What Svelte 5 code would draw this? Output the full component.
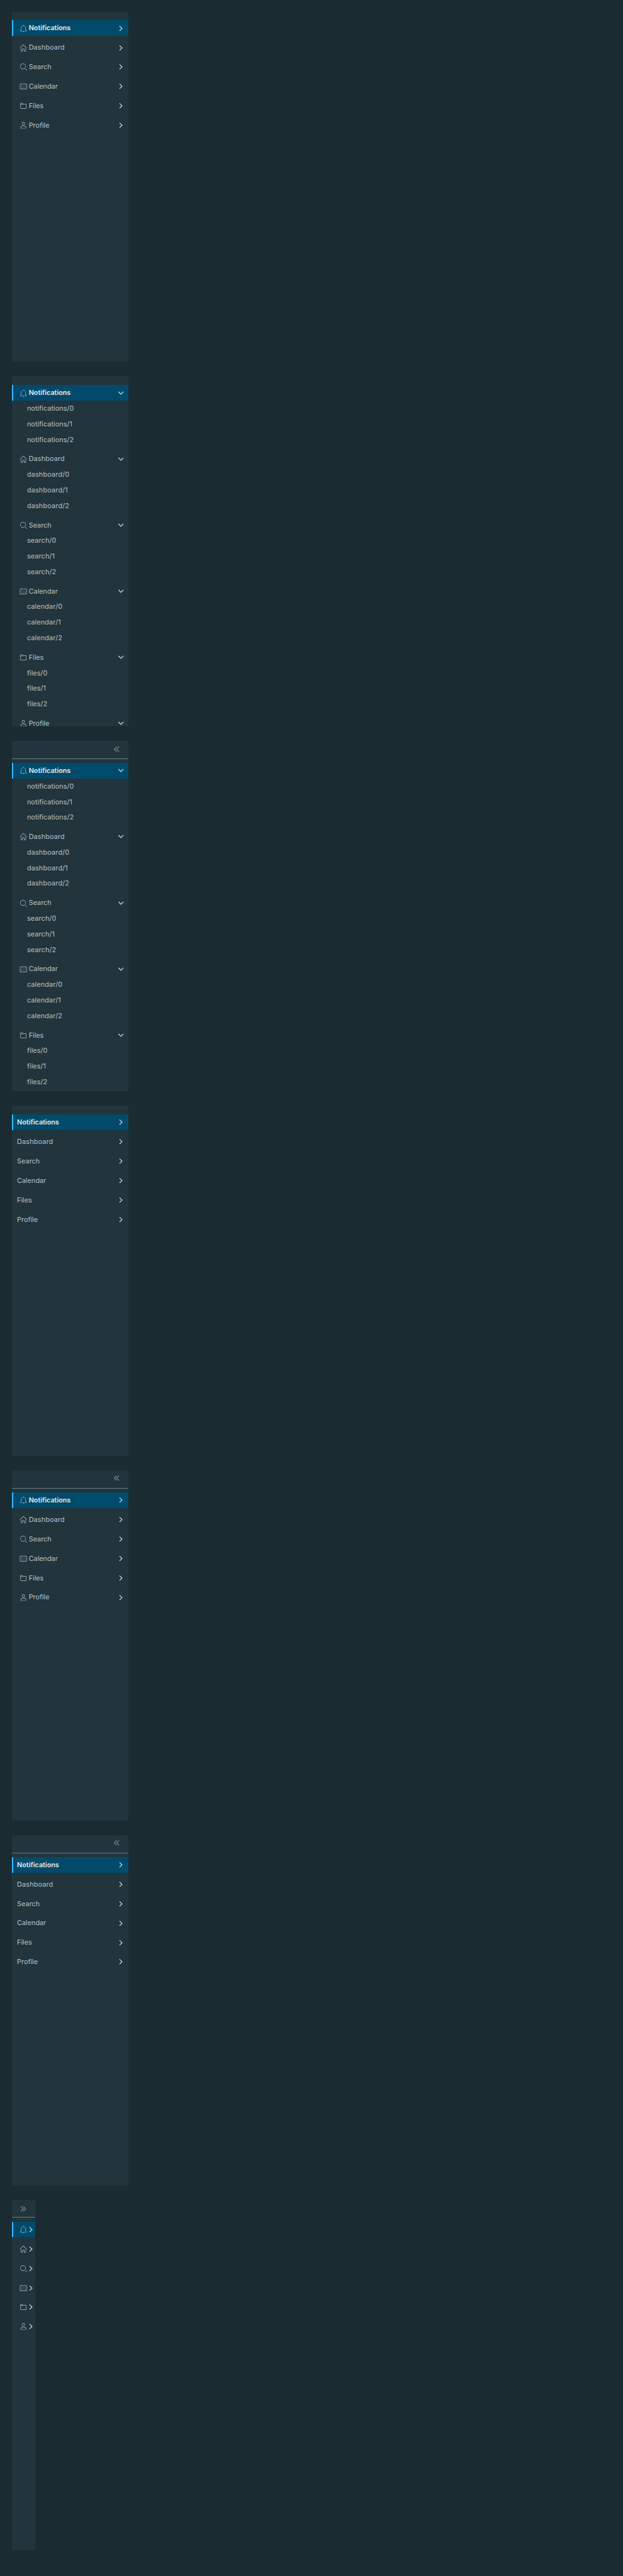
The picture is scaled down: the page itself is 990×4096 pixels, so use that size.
<script>
  const groups = [
    { name: 'Notifications', track: -0.03, childTrack: 0.08 },
    { name: 'Dashboard', track: 0.2, childTrack: 0.25 },
    { name: 'Search', track: 0.05, childTrack: 0.2 },
    { name: 'Calendar', track: 0, childTrack: 0.2 },
    { name: 'Files', track: 0, childTrack: 0.1 },
    { name: 'Profile', track: 0, childTrack: 0.1 }
  ];
  const panels = [
    { icons: true, shown: 6 },
    { icons: true, shown: 6, open: true },
    { icons: true, shown: 5, open: true, header: true },
    { shown: 6 },
    { icons: true, shown: 6, header: true },
    { shown: 6, header: true },
    { icons: true, shown: 6, header: true, collapsed: true }
  ];
</script>

{#snippet icon(name)}
  <svg class="icon" viewBox="0 0 36 36" aria-hidden="true">
    {#if name === 'Notifications'}
      <path d="M32.51,27.83A14.4,14.4,0,0,1,30,24.9a12.63,12.63,0,0,1-1.35-4.81V15.15A10.81,10.81,0,0,0,19.21,4.4V3.11a1.33,1.33,0,1,0-2.67,0V4.42A10.81,10.81,0,0,0,7.21,15.15v4.94A12.63,12.63,0,0,1,5.86,24.9a14.4,14.4,0,0,1-2.47,2.93,1,1,0,0,0-.34.75v1.36a1,1,0,0,0,1,1h27.8a1,1,0,0,0,1-1V28.58A1,1,0,0,0,32.51,27.83ZM5.13,28.94a16.17,16.17,0,0,0,2.44-3,14.24,14.24,0,0,0,1.65-5.85V15.15a8.74,8.74,0,1,1,17.47,0v4.94a14.24,14.24,0,0,0,1.65,5.85,16.17,16.17,0,0,0,2.44,3Z" />
      <path d="M18,34.28A2.67,2.67,0,0,0,20.58,32H15.32A2.67,2.67,0,0,0,18,34.28Z" />
    {:else if name === 'Dashboard'}
      <path d="M33.71,17.29l-15-15a1,1,0,0,0-1.41,0l-15,15a1,1,0,0,0,1.41,1.41L18,4.41,32.29,18.71a1,1,0,0,0,1.41-1.41Z" />
      <path d="M28,32h-5V22H13V32H8V18L6,20V32a2,2,0,0,0,2,2h7V24h6V34h7a2,2,0,0,0,2-2V19.76l-2-2Z" />
    {:else if name === 'Search'}
      <path d="M16.33,5.05A10.95,10.95,0,1,1,5.39,16,11,11,0,0,1,16.33,5.05m0-2.05a13,13,0,1,0,13,13,13,13,0,0,0-13-13Z" />
      <path d="M35,33.29l-7.37-7.42-1.42,1.41,7.37,7.42A1,1,0,1,0,35,33.29Z" />
    {:else if name === 'Calendar'}
      <path d="M32.25,6H29V8h3V30H4V8H7V6H3.75A1.78,1.78,0,0,0,2,7.81V30.19A1.78,1.78,0,0,0,3.75,32h28.5A1.78,1.78,0,0,0,34,30.19V7.81A1.78,1.78,0,0,0,32.25,6Z" />
      {#each [14, 19, 24] as y}
        {#each [8, 14, 20, 26] as x}
          <rect {x} {y} width="2" height="2" />
        {/each}
      {/each}
      <path d="M10,10a1,1,0,0,0,1-1V3A1,1,0,0,0,9,3V9A1,1,0,0,0,10,10Z" />
      <path d="M26,10a1,1,0,0,0,1-1V3a1,1,0,0,0-2,0V9A1,1,0,0,0,26,10Z" />
      <rect x="13" y="6" width="10" height="2" />
    {:else if name === 'Files'}
      <path d="M30,9H16.42L14.11,5.82A2,2,0,0,0,12.49,5H6A2,2,0,0,0,4,7V29a2,2,0,0,0,2,2H30a2,2,0,0,0,2-2V11A2,2,0,0,0,30,9Zm0,20H6V13h7.31a2,2,0,0,0,2-2H6V7h6.49l2.61,3.59a1,1,0,0,0,.81.41H30Z" />
    {:else}
      <path d="M18,17a7,7,0,1,0-7-7A7,7,0,0,0,18,17ZM18,5a5,5,0,1,1-5,5A5,5,0,0,1,18,5Z" />
      <path d="M30.47,24.37a17.16,17.16,0,0,0-24.93,0A2,2,0,0,0,5,25.74V31a2,2,0,0,0,2,2H29a2,2,0,0,0,2-2V25.74A2,2,0,0,0,30.47,24.37ZM29,31H7V25.73a15.17,15.17,0,0,1,22,0h0Z" />
    {/if}
  </svg>
{/snippet}

<main>
  {#each panels as p}
    <nav class:collapsed={p.collapsed} class:with-header={p.header} class:with-icons={p.icons}>
      {#if p.header}
        <div class="toggle">
          <svg class="double" viewBox="0 0 36 36" aria-hidden="true">
            <path d="M29,19.41a1,1,0,0,1-.71-.29L18,8.83,7.71,19.12a1,1,0,0,1-1.41-1.41L18,6,29.71,17.71A1,1,0,0,1,29,19.41Z" />
            <path d="M29,30.41a1,1,0,0,1-.71-.29L18,19.83,7.71,30.12a1,1,0,0,1-1.41-1.41L18,17,29.71,28.71A1,1,0,0,1,29,30.41Z" />
          </svg>
        </div>
      {/if}
      <div class="groups">
        {#each groups.slice(0, p.shown) as { name, track, childTrack }, i}
          <section>
            <div class="item" class:active={i === 0}>
              {#if p.icons}{@render icon(name)}{/if}
              {#if !p.collapsed}<span class="label" style:letter-spacing="{track}px">{name}</span>{/if}
              <svg class="caret" class:down={p.open} viewBox="0 0 36 36" aria-hidden="true">
                <path d="M29.52,22.52,18,10.6,6.48,22.52a1.7,1.7,0,0,0,2.45,2.36L18,15.49l9.08,9.39a1.7,1.7,0,0,0,2.45-2.36Z" />
              </svg>
            </div>
            {#if p.open && i < 5}
              {#each [0, 1, 2] as n}
                <div class="child" style:letter-spacing="{childTrack}px">{name.toLowerCase()}/{n}</div>
              {/each}
            {/if}
          </section>
        {/each}
      </div>
    </nav>
  {/each}
</main>

<style>
  :global(body) {
    background: #1b2b32;
  }
  main {
    zoom: 0.7732;
    box-sizing: border-box;
    height: 5296px;
    padding: 24px;
    display: flex;
    flex-direction: column;
    gap: 30px;
    overflow: hidden;
    font-family: Inter, 'Open Sans', sans-serif;
    font-size: 14px;
    line-height: 32.7px;
    color: #b9c5cb;
  }
  nav {
    flex: none;
    box-sizing: border-box;
    width: 240px;
    height: 720px;
    padding-top: 18px;
    overflow: hidden;
    background: #22343c;
  }
  nav.with-header {
    padding-top: 0;
  }
  nav.collapsed {
    width: 48px;
  }
  .toggle {
    box-sizing: border-box;
    height: 37px;
    margin-bottom: 8px;
    padding: 8px 16px 0 0;
    display: flex;
    justify-content: flex-end;
    align-items: flex-start;
    border-bottom: 1px solid #6c7c84;
  }
  .collapsed .toggle {
    padding-top: 10.7px;
  }
  .groups {
    display: flex;
    flex-direction: column;
    gap: 8px;
  }
  .item {
    box-sizing: border-box;
    height: 32px;
    padding: 0 8px 0 8.5px;
    border-left: 3px solid transparent;
    display: flex;
    align-items: center;
  }
  .with-icons .item {
    padding-left: 13px;
  }
  .collapsed .item {
    padding-right: 0;
  }
  .active {
    background: #004b6b;
    border-left-color: #2ec0ff;
    font-weight: 600;
    color: #e3eaed;
  }
  svg {
    flex: none;
    width: 16px;
    height: 16px;
    fill: #b9c5cb;
  }
  .label {
    flex: 1;
    height: 32px;
  }
  .icon + .label {
    margin-left: 3.5px;
  }
  .caret {
    transform: rotate(90deg);
    fill: #d5dde1;
  }
  .caret.down {
    transform: rotate(180deg);
  }
  .double {
    transform: rotate(-90deg);
  }
  .collapsed .double {
    transform: rotate(90deg);
  }
  .child {
    height: 32px;
    padding-left: 31.5px;
  }
</style>
